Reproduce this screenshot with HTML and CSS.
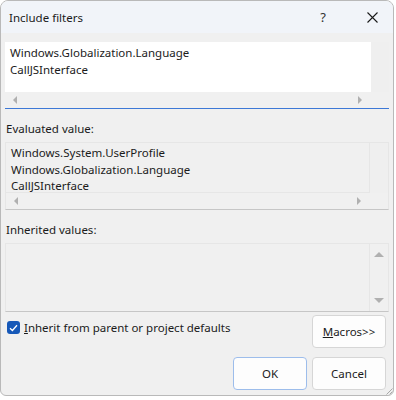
FILE: index.html
```html
<!DOCTYPE html>
<html>
<head>
<meta charset="utf-8">
<link rel="stylesheet" href="styles.css">
</head>
<body>
<div class="window">
  <div class="titlebar">
    <span class="title">Include filters</span>
    <span class="help">?</span>
    <span class="close">
      <svg width="11" height="11" viewBox="0 0 11 11"><path d="M0.5 0.5 L10.5 10.5 M10.5 0.5 L0.5 10.5" stroke="#1a1a1a" stroke-width="1.1" fill="none"/></svg>
    </span>
  </div>
  <div class="content">
    <div class="box box-edit">
      <div class="text white">
        <div>Windows.Globalization.Language</div>
        <div>CallJSInterface</div>
      </div>
      <div class="vcol"></div>
      <div class="hscroll">
        <span class="arrow left"></span>
        <span class="arrow right"></span>
      </div>
      <div class="corner"></div>
    </div>

    <div class="label">Evaluated value:</div>
    <div class="box box-ro">
      <div class="text">
        <div>Windows.System.UserProfile</div>
        <div>Windows.Globalization.Language</div>
        <div>CallJSInterface</div>
      </div>
      <div class="vcol"></div>
      <div class="hscroll">
        <span class="arrow left"></span>
        <span class="arrow right"></span>
      </div>
      <div class="corner"></div>
    </div>

    <div class="label">Inherited values:</div>
    <div class="box box-inh">
      <div class="text"></div>
      <div class="vscroll">
        <span class="arrow up"></span>
        <span class="arrow down"></span>
      </div>
    </div>

    <div class="row-check">
      <label class="check">
        <span class="checkbox">
          <svg width="9" height="8" viewBox="0 0 9 8"><path d="M1 4.2 L3.4 6.5 L8 1.3" stroke="#fff" stroke-width="1.3" fill="none"/></svg>
        </span>
        <span><u>I</u>nherit from parent or project defaults</span>
      </label>
      <button class="btn"><u>M</u>acros&gt;&gt;</button>
    </div>
    <div class="row-buttons">
      <button class="btn btn-default">OK</button>
      <button class="btn">Cancel</button>
    </div>
  </div>
  <svg class="grip" width="8" height="8" viewBox="0 0 8 8"><path d="M7.5 1.5 L1.5 7.5 M7.5 4.5 L4.5 7.5" stroke="#a8a8a8" stroke-width="1" fill="none"/></svg>
</div>
</body>
</html>
```
FILE: styles.css
```css
html, body {
  margin: 0;
  padding: 0;
  background: #ffffff;
}
body {
  font-family: "Noto Sans", "Open Sans", sans-serif;
  font-size: 11.5px;
  color: #1b1b1b;
}
.window {
  position: relative;
  width: 392px;
  height: 394px;
  border: 1px solid #b9b9b9;
  border-radius: 8px 8px 6px 6px;
  background: #f0f0f0;
  overflow: hidden;
}
.titlebar {
  height: 32px;
  background: #f1f4f9;
  display: flex;
  align-items: center;
  padding-left: 8px;
}
.title {
  flex: 1;
  font-size: 11.5px;
}
.help {
  width: 12px;
  text-align: center;
  font-size: 13px;
  margin-right: 38px;
  color: #333;
}
.close {
  display: flex;
  width: 11px;
  margin-right: 15px;
}
.content {
  padding: 9px 4px 0 4px;
}
.box {
  display: grid;
  grid-template-columns: 1fr 18px;
}
.box-edit {
  grid-template-rows: 50px 16px;
  border-bottom: 1px solid #3d78d6;
}
.box-ro {
  grid-template-rows: 50px 16px;
  border: 1px solid #e6e6e6;
  border-bottom: 1px solid #c6c6c6;
}
.box-inh {
  grid-template-rows: 67px;
  border: 1px solid #e6e6e6;
  border-bottom: 1px solid #c6c6c6;
}
.text {
  padding: 3px 0 0 5px;
  line-height: 16.5px;
  overflow: hidden;
  white-space: nowrap;
}
.box-ro .text {
  padding-top: 2px;
  border-right: 1px solid #e6e6e6;
  border-bottom: 1px solid #e6e6e6;
}
.box-inh .text {
  border-right: 1px solid #e6e6e6;
}
.white {
  background: #ffffff;
}
.vcol {
  background: #efefef;
}
.hscroll {
  display: flex;
  align-items: center;
  justify-content: space-between;
  padding: 0 9px 0 8px;
}
.corner {
  background: #f0f0f0;
}
.vscroll {
  display: flex;
  flex-direction: column;
  align-items: center;
  justify-content: space-between;
  padding: 8px 0 8px 0;
}
.arrow {
  width: 0;
  height: 0;
  display: block;
}
.arrow.left {
  border-top: 4px solid transparent;
  border-bottom: 4px solid transparent;
  border-right: 4px solid #b0b0b0;
}
.arrow.right {
  border-top: 4px solid transparent;
  border-bottom: 4px solid transparent;
  border-left: 4px solid #b0b0b0;
}
.arrow.up {
  border-left: 5px solid transparent;
  border-right: 5px solid transparent;
  border-bottom: 5px solid #b0b0b0;
}
.arrow.down {
  border-left: 5px solid transparent;
  border-right: 5px solid transparent;
  border-top: 5px solid #b0b0b0;
}
.label {
  margin: 12px 0 5px 1px;
  line-height: 16px;
  color: #1b1b1b;
}
.row-check {
  display: flex;
  justify-content: space-between;
  align-items: flex-start;
  margin-top: 3px;
  padding-right: 3px;
}
.check {
  display: flex;
  align-items: center;
  gap: 4px;
  margin-top: 5px;
  padding-left: 2px;
  font-size: 11.5px;
}
.checkbox {
  width: 13px;
  height: 13px;
  border-radius: 3px;
  background: #1658b8;
  display: flex;
  align-items: center;
  justify-content: center;
}
.btn {
  width: 74px;
  height: 33px;
  background: #fdfdfd;
  border: 1px solid #d6d6d6;
  border-radius: 4px;
  font-family: "Noto Sans", "Open Sans", sans-serif;
  font-size: 11.5px;
  color: #1b1b1b;
  padding: 0;
}
.row-buttons {
  display: flex;
  justify-content: flex-end;
  gap: 5px;
  margin-top: 9px;
  padding-right: 3px;
}
.btn-default {
  border-color: #9dbdeb;
}
.grip {
  position: absolute;
  right: 0;
  bottom: 0;
}
```
